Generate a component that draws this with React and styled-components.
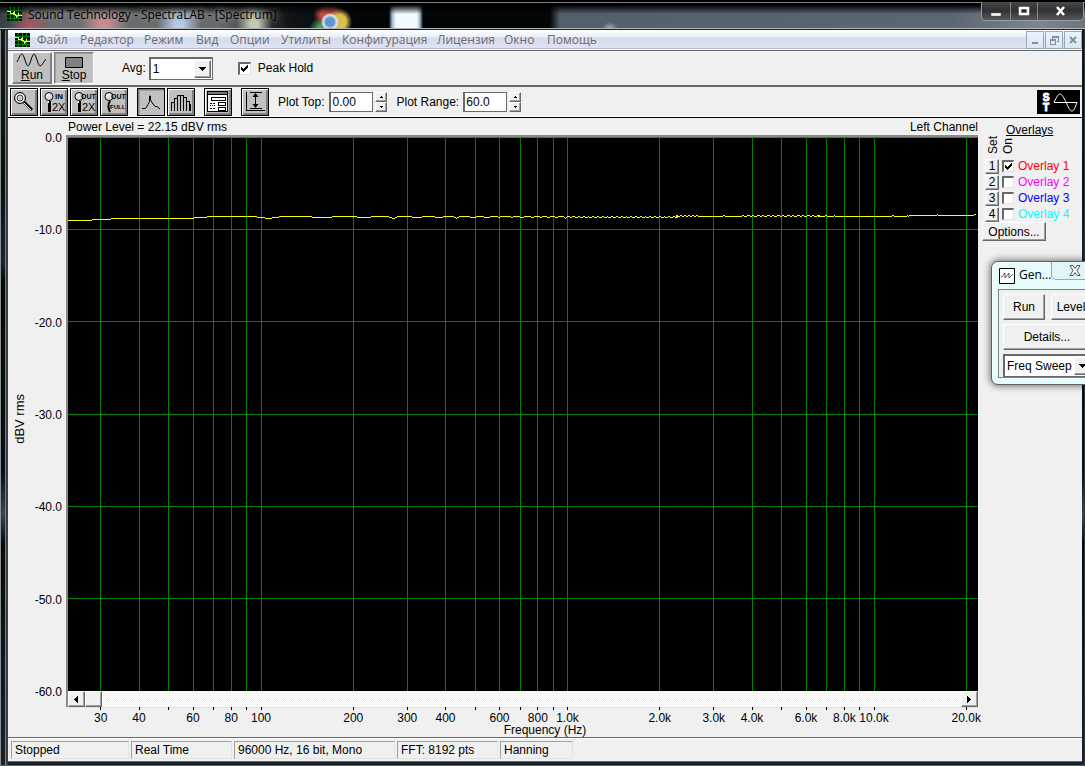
import React, { useState } from "react";
import styled, { createGlobalStyle, css } from "styled-components";

const Global = createGlobalStyle`
  * { box-sizing: border-box; }
  html, body { margin: 0; padding: 0; background: #05070a; }
  body, button, input, select {
    font-family: "Liberation Sans", Arial, sans-serif;
    font-size: 12px;
    line-height: 14px;
    color: #000;
  }
  button { padding: 0; margin: 0; }
  svg { display: block; }
`;

const raised = css`
  border: 1px solid;
  border-color: #fff #696969 #696969 #fff;
  box-shadow: inset -1px -1px 0 #a0a0a0;
`;
const sunken = css`
  border: 2px solid;
  border-color: #696969 #e3e3e3 #e3e3e3 #696969;
`;

const Frame = styled.div`
  position: relative;
  overflow: hidden;
  display: flex;
  flex-direction: column;
  min-height: 100vh;
  padding: 0 3px 4px 8px;
  background:
    linear-gradient(90deg, #8a8f92 1px, transparent 1px 5px, #7c8082 5px 6px, #3a3d3f 6px 8px, transparent 8px),
    linear-gradient(180deg, #15181b, #0a0f12 25%, #1d2428 34%, #05080a 37%, #0a1014 62%, #39454f 67%, #06090b 71%, #1a2228);
  box-shadow: inset -1px 0 #2e3440, inset 0 -1px #5b6670;
`;

const TitleBar = styled.header`
  display: flex;
  align-items: flex-start;
  height: 30px;
  margin: 0 -3px 0 -8px;
  padding-left: 7px;
  border-top: 2px solid #000;
  border-bottom: 1px solid #1c2024;
  box-shadow: inset 0 1px #7d8286, inset 0 -1px #b5babd;
  background:
    linear-gradient(180deg, #000 0 3px, transparent 12px),
    radial-gradient(ellipse 24px 20px at 104px 22px, #c98a8e 20%, transparent),
    radial-gradient(circle at 330px 20px, #5b93d4 0 4px, #dfe6ec 7px, transparent 9px),
    radial-gradient(ellipse 12px 14px at 340px 20px, #d8c04a 50%, transparent),
    radial-gradient(ellipse 16px 12px at 329px 12px, #c8504a 50%, transparent),
    radial-gradient(ellipse 16px 12px at 325px 26px, #4c9a58 40%, transparent),
    radial-gradient(ellipse 22px 24px at 179px 22px, #b4cbe6 20%, transparent),
    radial-gradient(ellipse 18px 24px at 254px 22px, #c3ccb2 20%, transparent),
    radial-gradient(ellipse 20px 20px at 30px 27px, #b9545e, transparent),
    linear-gradient(90deg, transparent 389px, #9bb4c6 392px, #f0faff 396px, #f0faff 417px, #9bb4c6 420px, transparent 423px),
    radial-gradient(ellipse 8px 6px at 610px 26px, #9aa8b4, transparent),
    linear-gradient(90deg, #3c3f42, #6b6e70 50px, #666a6c 220px, #101418 290px, #030507 360px, #030507 550px, #535f6b 560px, #5a6672 950px, #7d8690 1040px, #6c757c);
`;
const TitleText = styled.h1`
  flex: 1;
  margin: 4px 0 0 6px;
  font: 400 12px/18px "Open Sans", "Noto Sans", sans-serif;
  color: #000;
  text-shadow: 0 0 6px #aaa;
`;
const AppIcon = styled.svg`
  width: 15px;
  height: 14px;
  margin-top: ${(p) => p.$top || 0}px;
  flex: none;
`;
const CaptionButtons = styled.div`
  display: flex;
  height: 19px;
  margin-right: 1px;
  border: 1px solid #9a9da0;
  border-top: 0;
  border-radius: 0 0 5px 5px;
  overflow: hidden;
`;
const CaptionButton = styled.button`
  width: ${(p) => p.$w}px;
  display: grid;
  place-items: center;
  border: 0;
  border-left: ${(p) => (p.$first ? 0 : "1px solid #85888b")};
  background: linear-gradient(#47484a, #2e3032 45%, #55585b);
`;

const MenuBar = styled.nav`
  display: flex;
  align-items: center;
  height: 21px;
  padding: 0 0 0 7px;
  border-bottom: 1px solid #6b6b6b;
  box-shadow: inset 0 -1px #fff, inset 0 -2px #b9c3d4;
  background: linear-gradient(#fff, #e9edf6 35%, #d5dbed 40%, #dfe5f3);
`;
const MenuList = styled.div`
  flex: 1;
  display: flex;
  gap: 14px;
  margin-left: 7px;
`;
const MenuItem = styled.button`
  border: 0;
  background: none;
  font: 12px/18px "Open Sans", "Noto Sans", sans-serif;
  color: #6d6d6d;
  white-space: nowrap;
  text-align: left;
  width: ${(p) => p.$w}px;
`;
const MdiButtons = styled.div`
  display: flex;
  gap: 1px;
`;
const MdiButton = styled.button`
  width: 18px;
  height: 18px;
  display: grid;
  place-items: center;
  border: 1px solid #98a9b5;
  background: linear-gradient(#e9f4fc, #d7e7f5);
`;

const RunBar = styled.div`
  display: flex;
  align-items: center;
  height: 36px;
  padding-left: 4px;
  border-bottom: 2px solid #696b68;
  background: #f0f0f0;
`;
const RunButton = styled.button`
  display: flex;
  flex-direction: column;
  align-items: center;
  justify-content: space-between;
  width: 40px;
  height: 32px;
  margin-right: 2px;
  padding: 0 0 1px;
  background: #c0c0c0;
  border: 1px solid;
  border-color: ${(p) => (p.$pressed ? "#808080 #fff #fff #808080" : "#fff #808080 #808080 #fff")};
  box-shadow: ${(p) => (p.$pressed ? "inset 1px 1px #a0a0a0" : "inset -1px -1px #808080")};
`;
const Hot = styled.span`
  text-decoration: underline;
`;
const FieldLabel = styled.label`
  margin-left: ${(p) => p.$left || 0}px;
  margin-right: ${(p) => p.$right || 0}px;
  white-space: nowrap;
`;
const Combo = styled.div`
  position: relative;
  width: ${(p) => p.$w}px;
  height: 23px;
  flex: none;
  border: 1px solid #696969;
  border-width: 2px 1px 1px 2px;
  background: #fff;
`;
const ComboSelect = styled.select`
  appearance: none;
  width: 100%;
  height: 100%;
  padding: 0 18px 0 2px;
  border: 0;
  background: transparent;
`;
const ComboArrow = styled.span`
  position: absolute;
  top: 1px;
  right: 1px;
  bottom: 1px;
  width: 17px;
  display: grid;
  place-items: center;
  background: #f0f0f0;
  pointer-events: none;
  ${raised}
`;
const Check = styled.input`
  appearance: none;
  flex: none;
  width: ${(p) => p.$size}px;
  height: ${(p) => p.$size}px;
  margin: 0 0 0 ${(p) => p.$left || 0}px;
  ${sunken}
  border-width: 2px 1px 1px 2px;
  background: #fff;
  &:checked {
    background-image: linear-gradient(#000, #000), linear-gradient(#000, #000), linear-gradient(#000, #000),
      linear-gradient(#000, #000), linear-gradient(#000, #000), linear-gradient(#000, #000), linear-gradient(#000, #000);
    background-repeat: no-repeat;
    background-size: 1px 3px;
    background-position: 1px 3px, 2px 4px, 3px 5px, 4px 4px, 5px 3px, 6px 2px, 7px 1px;
  }
`;

const ToolBar = styled.div`
  display: flex;
  align-items: center;
  height: 31px;
  padding: 0 2px;
  border-bottom: 1px solid #000;
  box-shadow: inset 0 -1px #fff;
  background: #f0f0f0;
`;
const ToolGroup = styled.div`
  display: flex;
  gap: 2px;
  margin-right: 9px;
`;
const ToolButton = styled.button`
  width: 28px;
  height: 28px;
  border: 1px solid #000;
  background: #c0c0c0;
  box-shadow: ${(p) => (p.$pressed ? "inset 1px 1px #808080, inset 2px 2px #a0a0a0" : "inset 1px 1px #fff, inset -1px -1px #808080, inset -2px -2px #808080")};
`;
const NumberBox = styled.input`
  width: 44px;
  height: 20px;
  padding: 0 0 0 1px;
  border: 1px solid #696969;
  border-width: 1px 1px 1px 2px;
  background: #fff;
`;
const Spinner = styled.div`
  display: flex;
  flex-direction: column;
  width: 12px;
  margin-left: 2px;
`;
const SpinButton = styled.button`
  height: 10px;
  display: grid;
  place-items: center;
  background: #f0f0f0;
  ${raised}
`;
const Logo = styled.svg`
  width: 43px;
  height: 24px;
  margin-left: auto;
`;

const Main = styled.main`
  flex: 1;
  display: grid;
  grid-template-columns: 20px 38px minmax(0, 1fr) 104px;
  grid-template-rows: 17px minmax(300px, 1fr) 16px 30px;
  background: #f0f0f0;
`;
const Caption = styled.div`
  grid-column: 3;
  display: flex;
  justify-content: space-between;
  padding: 2px 0 0 2px;
`;
const AxisTitleY = styled.div`
  grid-column: 1;
  grid-row: 2;
  align-self: center;
  justify-self: end;
  margin-top: 12px;
  writing-mode: vertical-rl;
  transform: rotate(180deg);
  font-size: 13px;
  line-height: 16px;
`;
const AxisLabelsY = styled.div`
  grid-column: 2;
  grid-row: 2;
  display: flex;
  flex-direction: column;
  justify-content: space-between;
  margin: -4px 0 -8px;
  padding-right: 4px;
  text-align: right;
  white-space: nowrap;
`;
const Plot = styled.div`
  grid-column: 3;
  grid-row: 2;
  position: relative;
  border: 2px solid #8a8a8a;
  border-width: 2px 0 0 2px;
  background: #000;
`;
const FillSvg = styled.svg`
  position: absolute;
  inset: 0;
  width: 100%;
  height: 100%;
  shape-rendering: crispEdges;
`;
const ScrollBar = styled.div`
  grid-column: 3;
  grid-row: 3;
  display: flex;
  border-left: 2px solid #8a8a8a;
  background: repeating-conic-gradient(#fff 0 25%, #f0f0f0 0 50%) 0 0 / 2px 2px;
`;
const ScrollButton = styled.button`
  width: 17px;
  height: 16px;
  display: grid;
  place-items: center;
  margin-left: ${(p) => (p.$end ? "auto" : "0")};
  padding-right: 2px;
  background: #f0f0f0;
  ${raised}
`;
const AxisX = styled.div`
  grid-column: 3;
  grid-row: 4;
  padding-left: 2px;
  border-top: 1px solid #e3e3e3;
`;
const AxisXSvg = styled.svg`
  width: 100%;
  height: 16px;
  overflow: visible;
  font-size: 12px;
  text-anchor: middle;
`;
const AxisTitleX = styled.div`
  padding-left: 44px;
  text-align: center;
  line-height: 13px;
`;

const SidePanel = styled.aside`
  grid-column: 4;
  grid-row: 1 / 5;
  display: flex;
  flex-direction: column;
  align-items: flex-start;
  padding: 5px 0 0 4px;
`;
const PanelTitle = styled.div`
  padding-left: 24px;
  text-decoration: underline;
`;
const ColumnHeads = styled.div`
  display: flex;
  align-items: flex-end;
  height: 21px;
  margin-left: 4px;
  padding-bottom: 4px;
  gap: 1px;
  line-height: 14px;
`;
const ColumnHead = styled.span`
  writing-mode: vertical-rl;
  transform: rotate(180deg);
`;
const OverlayRow = styled.div`
  display: flex;
  align-items: center;
  height: 16px;
  margin-left: 3px;
`;
const SetButton = styled.button`
  width: 14px;
  height: 15px;
  margin-right: 3px;
  line-height: 12px;
  background: #f0f0f0;
  ${raised}
`;
const OverlayName = styled.label`
  margin-left: 4px;
  color: ${(p) => p.$color};
`;
const PushButton = styled.button`
  width: ${(p) => p.$w}px;
  height: ${(p) => p.$h}px;
  flex: none;
  background: #f0f0f0;
  ${raised}
`;

const StatusBar = styled.footer`
  display: flex;
  gap: 2px;
  height: 25px;
  padding: 2px 3px 4px;
  border-top: 1px solid #696969;
  box-shadow: inset 0 1px #fff;
  border-bottom: 1px solid #696969;
  background: #f0f0f0;
`;
const StatusCell = styled.div`
  width: ${(p) => p.$w}px;
  height: 18px;
  margin-top: 1px;
  padding-left: 3px;
  border: 1px solid;
  border-color: #a0a0a0 #e3e3e3 #e3e3e3 #a0a0a0;
  line-height: 16px;
  white-space: nowrap;
`;

const GenWindow = styled.section`
  position: absolute;
  top: 261px;
  right: -56px;
  width: 150px;
  padding: 0 8px 6px 6px;
  border: 1px solid #5a6268;
  border-radius: 7px;
  background: #e6fbfc;
  box-shadow: 0 0 7px 1px rgba(0, 0, 0, 0.55), inset 1px 1px #fff;
`;
const GenTitle = styled.div`
  display: flex;
  height: 27px;
  padding-left: 1px;
  font: 12px/26px "Open Sans", "Noto Sans", sans-serif;
`;
const GenIcon = styled.svg`
  width: 16px;
  height: 16px;
  margin: 6px 4px 0 0;
`;
const GenClose = styled.button`
  width: 48px;
  height: 18px;
  padding-left: 17px;
  border: 1px solid #9aa5ab;
  border-top: 0;
  border-radius: 0 0 5px 5px;
  background: #e0f5f7;
`;
const GenBody = styled.div`
  display: flex;
  flex-direction: column;
  gap: 4px;
  padding: 4px 4px 0;
  border: 1px solid #7c8488;
  background: #f0f0f0;
`;
const GenRow = styled.div`
  display: flex;
  gap: 6px;
`;

const f2x = (f) => `${((193 + 306.5 * Math.log10(f / 100)) / 910) * 100}%`;
const gridFreqs = [30, 40, 50, 60, 70, 80, 90, 100, 200, 300, 400, 500, 600, 700, 800, 900, 1000,
  2000, 3000, 4000, 5000, 6000, 7000, 8000, 9000, 10000, 20000];
const freqLabels = { 30: "30", 40: "40", 60: "60", 80: "80", 100: "100", 200: "200", 300: "300", 400: "400",
  600: "600", 800: "800", 1000: "1.0k", 2000: "2.0k", 3000: "3.0k", 4000: "4.0k", 6000: "6.0k",
  8000: "8.0k", 10000: "10.0k", 20000: "20.0k" };
const levels = ["0.0", "-10.0", "-20.0", "-30.0", "-40.0", "-50.0", "-60.0"];

/* [start, level] runs of the measured curve, in plot units */
const measured = [
  [0, 83], [24, 82], [43, 81], [126, 80], [139, 79], [189, 80], [197, 81], [204, 80], [211, 79],
  [244, 80], [264, 79], [289, 80], [303, 79], [321, 80], [324, 81], [327, 80], [329, 79],
  [344, 80], [354, 79], [367, 80], [375, 79], [386, 80], [388, 81], [389, 80], [391, 79],
  [402, 80], [408, 79], [416, 80], [422, 79], [430, 80], [432, 79], [443, 80], [445, 79],
  [452, 80], [456, 79], [463, 80], [466, 79], [472, 80], [474, 79], [479, 80], [482, 79],
  [487, 80], [490, 79], [496, 80], [497, 81], [498, 80], [499, 79], [502, 80], [504, 79],
];
for (let x = 507, i = 0; x < 608; i += 1) {
  measured.push([x, 80], [x + 3, 79]);
  x += i % 4 === 2 ? 4 : 5;
}
for (let x = 608, i = 0; x < 632; x += 2, i += 1) measured.push([x, i % 2 ? 79 : 78]);
measured.push([632, 79], [655, 78], [657, 79]);
for (let x = 674; x < 750; x += 5) measured.push([x, 78], [x + 2 + (x % 2), 79]);
measured.push([750, 79], [757, 78], [759, 79], [766, 78], [767, 79], [824, 78], [826, 79], [839, 78],
  [840, 79], [841, 78], [869, 77], [870, 78], [906, 77], [908, 77]);
const curve = measured
  .map(([x, y], i) => {
    const next = measured[i + 1];
    return next ? `M${x} ${y + 0.5}H${next[0]}` : "";
  })
  .join("");

function SpectraMark({ top }) {
  return (
    <AppIcon viewBox="0 0 15 14" $top={top} shapeRendering="crispEdges">
      <path fill="#001800" d="M0 0h15v14H0z" />
      <path stroke="#087a18" d="M3.5 0v14M7.5 0v14M11.5 0v14M0 3.5h15M0 7.5h15M0 11.5h15" />
      <path fill="none" stroke="#f5f03a" d="M0 4.500h3v2h3M6.500 5v3M7.500 4v4M8.500 7v2M9.500 8v3M10.500 8v2M11.500 6v3M12 8.500h3" />
    </AppIcon>
  );
}

const DownArrow = () => (
  <svg width="7" height="4" shapeRendering="crispEdges"><path d="M0 0h7v1H0zM1 1h5v1H1zM2 2h3v1H2zM3 3h1v1H3z" /></svg>
);

function Lens({ small }) {
  return small ? (
    <g>
      <circle cx="8" cy="7.5" r="4" fill="#ddd" stroke="#000" />
      <path d="M5.5 8a3 3 0 0 1 3-3" fill="none" stroke="#fff" />
      <path stroke="#000" strokeWidth="3" d="M8.500 12v11" />
      <path stroke="#fff" d="M7.500 12v2" />
    </g>
  ) : (
    <g>
      <circle cx="9" cy="9" r="5.500" fill="#c0c0c0" stroke="#000" />
      <circle cx="9" cy="9" r="4" fill="#ccc" stroke="#fff" />
      <circle cx="9" cy="9" r="3" fill="none" stroke="#000" strokeWidth=".7" />
      <path stroke="#000" strokeWidth="3" d="m13 13 8 8" />
      <path stroke="#fff" d="m13 14 7 7" />
    </g>
  );
}

function ZoomGlyph({ top, bottom, full }) {
  return (
    <svg width="26" height="26" viewBox="0 0 26 26" fontFamily="Liberation Sans, sans-serif">
      {full ? (
        <g>
          <circle cx="8" cy="7.5" r="4" fill="#ddd" stroke="#000" />
          <path d="M5.500 8a3 3 0 0 1 3-3" fill="none" stroke="#fff" />
          <path d="M9 12c-2 3-2 7 0 11" fill="none" stroke="#000" strokeWidth="2" />
        </g>
      ) : <Lens small />}
      <text x={top === "IN" ? 14 : 10} y="10" fontSize={top === "IN" ? 8 : 7} fontWeight="700">{top}</text>
      <text x={full ? 9 : 11} y={full ? 20 : 22} fontSize={full ? 6 : 11} fontWeight={full ? 700 : 400}>{bottom}</text>
    </svg>
  );
}

function Spin({ name }) {
  return (
    <Spinner>
      <SpinButton aria-label={`${name} up`}>
        <svg width="3" height="2" shapeRendering="crispEdges"><path d="M1 0h1v1H1zM0 1h3v1H0z" /></svg>
      </SpinButton>
      <SpinButton aria-label={`${name} down`}>
        <svg width="3" height="2" shapeRendering="crispEdges"><path d="M0 0h3v1H0zM1 1h1v1H1z" /></svg>
      </SpinButton>
    </Spinner>
  );
}

const menus = [["Файл", 29], ["Редактор", 50], ["Режим", 38], ["Вид", 20], ["Опции", 37], ["Утилиты", 47],
  ["Конфигурация", 81], ["Лицензия", 53], ["Окно", 29], ["Помощь", 49]];
const overlays = [["1", "#ff0000"], ["2", "#ff00ff"], ["3", "#0000ff"], ["4", "#00ffff"]];
const statuses = [["Stopped", 118], ["Real Time", 101], ["96000 Hz, 16 bit, Mono", 161], ["FFT: 8192 pts", 101], ["Hanning", 73]];

export default function App() {
  const [shown, setShown] = useState({ 1: true });
  return (
    <>
      <Global />
      <Frame>
        <TitleBar>
          <SpectraMark top={5} />
          <TitleText>Sound Technology - SpectraLAB - [Spectrum]</TitleText>
          <CaptionButtons>
            <CaptionButton $w={28} $first aria-label="Minimize">
              <svg width="12" height="12"><path fill="#fff" stroke="#55565a" strokeWidth=".5" d="M1 8h10v3H1z" /></svg>
            </CaptionButton>
            <CaptionButton $w={27} aria-label="Maximize">
              <svg width="12" height="10"><path fill="none" stroke="#fff" strokeWidth="2.500" d="M2 2h8v6H2z" /></svg>
            </CaptionButton>
            <CaptionButton $w={46} aria-label="Close">
              <svg width="12" height="10"><path fill="none" stroke="#fff" strokeWidth="2.600" d="m2 1 7 8M9 1 2 9" /></svg>
            </CaptionButton>
          </CaptionButtons>
        </TitleBar>

        <MenuBar>
          <SpectraMark />
          <MenuList>
            {menus.map(([m, w]) => <MenuItem key={m} $w={w}>{m}</MenuItem>)}
          </MenuList>
          <MdiButtons>
            <MdiButton aria-label="Minimize document">
              <svg width="8" height="9"><path fill="#83929c" d="M1 6h6v2H1z" /></svg>
            </MdiButton>
            <MdiButton aria-label="Restore document">
              <svg width="9" height="9" shapeRendering="crispEdges"><path fill="#83929c" d="M2 0h7v6H7V5h1V2H3v1H2zM0 3h6v6H0zM1 5v3h4V5z" fillRule="evenodd" /></svg>
            </MdiButton>
            <MdiButton aria-label="Close document">
              <svg width="8" height="8"><path stroke="#83929c" strokeWidth="2" d="m1 1 6 6M7 1 1 7" /></svg>
            </MdiButton>
          </MdiButtons>
        </MenuBar>

        <RunBar>
          <RunButton>
            <svg width="32" height="14" viewBox="0 0 32 14"><path fill="none" stroke="#000" d="M1 9C3 6 4 1 6 1s4 12 6 12S16 1 18 1s4 12 6 12 4-5 6-7" /></svg>
            <span><Hot>R</Hot>un</span>
          </RunButton>
          <RunButton $pressed>
            <svg width="20" height="15"><path fill="#808080" stroke="#000" d="M1.500 4.500h17v10h-17z" /></svg>
            <span><Hot>S</Hot>top</span>
          </RunButton>
          <FieldLabel htmlFor="avg" $left={26} $right={3}>Avg:</FieldLabel>
          <Combo $w={64}>
            <ComboSelect id="avg"><option>1</option></ComboSelect>
            <ComboArrow><DownArrow /></ComboArrow>
          </Combo>
          <Check type="checkbox" id="peak" defaultChecked $size={13} $left={25} />
          <FieldLabel htmlFor="peak" $left={7}>Peak Hold</FieldLabel>
        </RunBar>

        <ToolBar>
          <ToolGroup>
            <ToolButton aria-label="Zoom"><svg width="26" height="26"><Lens /></svg></ToolButton>
            <ToolButton aria-label="Zoom in"><ZoomGlyph top="IN" bottom="2X" /></ToolButton>
            <ToolButton aria-label="Zoom out"><ZoomGlyph top="OUT" bottom="2X" /></ToolButton>
            <ToolButton aria-label="Zoom out full"><ZoomGlyph top="OUT" bottom="FULL" full /></ToolButton>
          </ToolGroup>
          <ToolGroup>
            <ToolButton $pressed aria-label="Line view">
              <svg width="26" height="26"><path fill="none" stroke="#000" d="M4 19.500h3.500l2.500-4 1.500-3V7h1v4l2.500 4 2 2.500h2l3 2.500" /></svg>
            </ToolButton>
            <ToolButton aria-label="Bar view">
              <svg width="26" height="26" shapeRendering="crispEdges"><path fill="none" stroke="#000" d="M3.500 22V13.500h3V22M6.500 13.500V9.500h3V22M9.500 9.500V6.500h3V22M12.500 6.500h3V22M15.500 8.500h3V22M18.500 12.500h3V22M21.500 15.500h1V22" /></svg>
            </ToolButton>
          </ToolGroup>
          <ToolGroup>
            <ToolButton aria-label="Settings">
              <svg width="26" height="26" shapeRendering="crispEdges">
                <path fill="#fff" stroke="#000" d="M2.500 2.500h20v20h-20z" />
                <path fill="#777" stroke="#000" d="M2.500 2.500h20v3h-20z" />
                <path stroke="#000" fill="#fff" d="M6.500 8.500h14v3h-14zM13.500 13.500h7v3h-7zM13.500 18.500h7v3h-7z" />
                <path stroke="#000" strokeDasharray="2 1" d="M5 14.500h6M5 19.500h6" />
                <path stroke="#000" strokeDasharray="1 1" d="M5 16.500h6" />
              </svg>
            </ToolButton>
          </ToolGroup>
          <ToolGroup>
            <ToolButton aria-label="Autoscale">
              <svg width="26" height="26">
                <path fill="none" stroke="#000" d="M4.500 3v18.500H23M8 3.500h12M8 19.500h12M13.500 5v13" shapeRendering="crispEdges" />
                <path d="m13.500 4 3 4h-6zM13.500 19l3-4h-6z" />
              </svg>
            </ToolButton>
          </ToolGroup>
          <FieldLabel htmlFor="top" $right={5}>Plot Top:</FieldLabel>
          <NumberBox id="top" defaultValue="0.00" />
          <Spin name="Plot top" />
          <FieldLabel htmlFor="range" $left={9} $right={4}>Plot Range:</FieldLabel>
          <NumberBox id="range" defaultValue="60.0" />
          <Spin name="Plot range" />
          <Logo viewBox="0 0 43 24" role="img" aria-label="Sound Technology">
            <path d="M0 0h43v24H0z" />
            <g fill="#fff" stroke="#fff" fontFamily="Liberation Sans, sans-serif" fontWeight="700" fontSize="10" textAnchor="middle">
              <text x="9" y="11">S</text>
              <text x="9" y="21">T</text>
            </g>
            <path fill="none" stroke="#fff" d="M17 12.500h23M17 12C20 7 21 4 23 4s4 4 6 8c2 5 4 9 6 9s3-3 5-9" />
          </Logo>
        </ToolBar>

        <Main>
          <Caption>
            <span>Power Level = 22.15 dBV rms</span>
            <span>Left Channel</span>
          </Caption>
          <AxisTitleY>dBV rms</AxisTitleY>
          <AxisLabelsY>
            {levels.map((l) => <span key={l}>{l}</span>)}
          </AxisLabelsY>
          <Plot>
            <FillSvg role="img" aria-label="Spectrum">
              {gridFreqs.map((f) => <line key={f} x1={f2x(f)} x2={f2x(f)} y1="0" y2="100%" stroke="#008000" />)}
              {levels.slice(1, 6).map((l, i) => {
                const y = `${((i + 1) / 6) * 100}%`;
                return <line key={l} x1="0" x2="100%" y1={y} y2={y} stroke="#008000" />;
              })}
              <rect width="100%" height="1" fill="#ff2020" />
              <svg width="100%" height="100%" viewBox="0 0 910 554" preserveAspectRatio="none">
                <path d={curve} fill="none" stroke="#ff0" />
              </svg>
            </FillSvg>
          </Plot>
          <ScrollBar>
            <ScrollButton aria-label="Scroll left"><svg width="4" height="7" shapeRendering="crispEdges"><path d="M3 0h1v7H3zM2 1h1v5H2zM1 2h1v3H1zM0 3h1v1H0z" /></svg></ScrollButton>
            <ScrollButton aria-label="Scroll thumb" />
            <ScrollButton aria-label="Scroll right" $end><svg width="4" height="7" shapeRendering="crispEdges"><path d="M0 0h1v7H0zM1 1h1v5H1zM2 2h1v3H2zM3 3h1v1H3z" /></svg></ScrollButton>
          </ScrollBar>
          <AxisX>
            <AxisXSvg>
              {gridFreqs.map((f) => (
                <g key={f}>
                  <line x1={f2x(f)} x2={f2x(f)} y1="-1" y2="2" stroke="#000" shapeRendering="crispEdges" />
                  {freqLabels[f] && <text x={f2x(f)} y="14">{freqLabels[f]}</text>}
                </g>
              ))}
            </AxisXSvg>
            <AxisTitleX>Frequency (Hz)</AxisTitleX>
          </AxisX>

          <SidePanel>
            <PanelTitle>Overlays</PanelTitle>
            <ColumnHeads>
              <ColumnHead>Set</ColumnHead>
              <ColumnHead>On</ColumnHead>
            </ColumnHeads>
            {overlays.map(([n, color]) => (
              <OverlayRow key={n}>
                <SetButton>{n}</SetButton>
                <Check
                  type="checkbox"
                  id={`overlay${n}`}
                  $size={12}
                  checked={!!shown[n]}
                  onChange={(e) => setShown({ ...shown, [n]: e.target.checked })}
                />
                <OverlayName htmlFor={`overlay${n}`} $color={color}>Overlay {n}</OverlayName>
              </OverlayRow>
            ))}
            <PushButton $w={64} $h={19}>Options...</PushButton>
          </SidePanel>
        </Main>

        <StatusBar>
          {statuses.map(([s, w]) => <StatusCell key={s} $w={w}>{s}</StatusCell>)}
        </StatusBar>

        <GenWindow>
          <GenTitle>
            <GenIcon viewBox="0 0 16 16">
              <path fill="#fff" stroke="#000" d="M.5.5h15v15H.5z" />
              <path fill="none" stroke="#333" strokeWidth=".8" d="M2 9h1l3-4v5l4-5v5l4-4" />
            </GenIcon>
            Gen...
            <GenClose aria-label="Close generator">
              <svg width="12" height="11"><path fill="#fff" stroke="#4c5358" d="M1 .5h3l2 3 2-3h3l-3 5 3 5H8l-2-3-2 3H1l3-5z" /></svg>
            </GenClose>
          </GenTitle>
          <GenBody>
            <GenRow>
              <PushButton $w={42} $h={26}>Run</PushButton>
              <PushButton $w={40} $h={26}>Level</PushButton>
            </GenRow>
            <PushButton $w={88} $h={26}>Details...</PushButton>
            <Combo $w={90}>
              <ComboSelect aria-label="Signal"><option>Freq Sweep</option></ComboSelect>
              <ComboArrow><DownArrow /></ComboArrow>
            </Combo>
          </GenBody>
        </GenWindow>
      </Frame>
    </>
  );
}
